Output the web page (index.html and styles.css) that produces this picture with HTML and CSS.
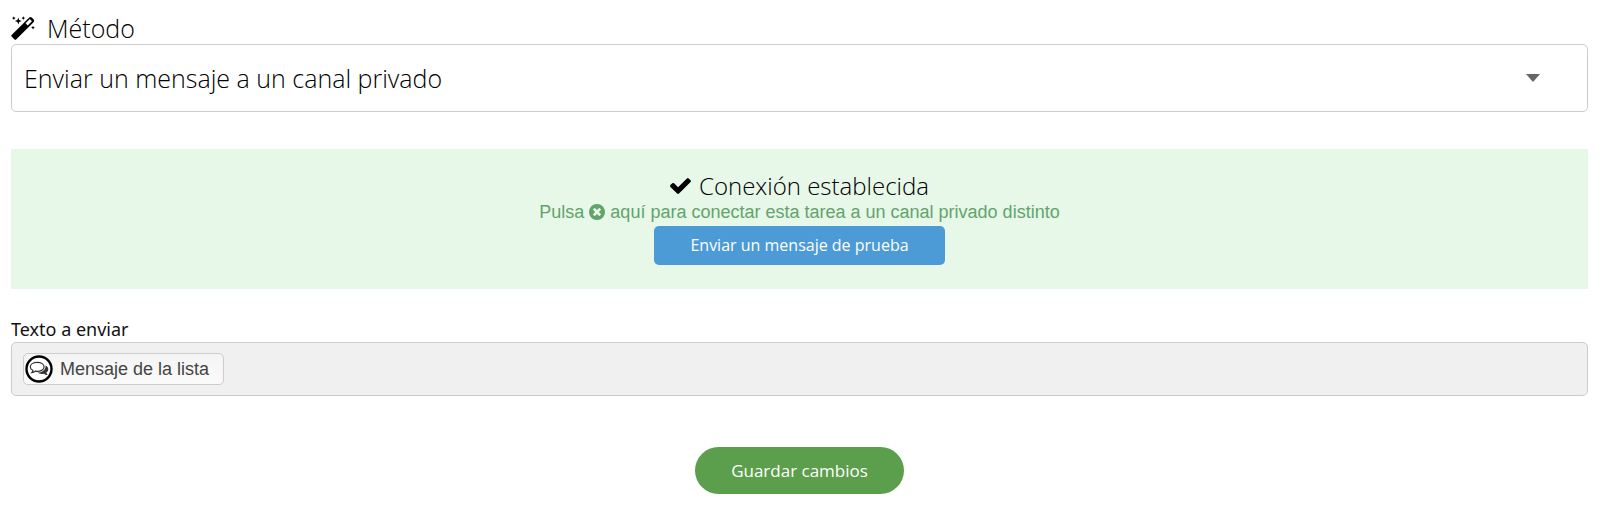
FILE: index.html
```html
<!DOCTYPE html>
<html lang="es">
<head>
<meta charset="UTF-8" />
<meta name="viewport" content="width=device-width, initial-scale=1" />
<title>Editar tarea</title>
<link rel="stylesheet" href="styles.css">
</head>
<body>
<form class="task-form">
  <label class="method-label" for="metodo">
    <svg class="icon-wand" viewBox="0 0 24 24" aria-hidden="true">
      <path fill-rule="evenodd" d="M.6 18.900 18 1.700q1.500-1.300 3 0l1.500 1.500q1.300 1.500 0 3L5.100 23.400q-.8.700-1.600 0L.6 20.500q-.7-.8 0-1.600zM14.600 7.300l2.100 2.100 4.200-4.200-2.100-2.100z"/>
      <path d="M7.300 1.600l.9 2.500 2.500.9-2.500.9-.9 2.500-.9-2.500L3.900 5l2.500-.9zM2.800.2l.6 1.300 1.300.6-1.300.6-.6 1.300-.6-1.300-1.300-.6 1.300-.6zM12.300.2l.6 1.300 1.300.6-1.300.6-.6 1.300-.6-1.300-1.300-.6 1.300-.6zM22 9.800l.6 1.300 1.300.6-1.300.6-.6 1.300-.6-1.300-1.300-.6 1.300-.6z"/>
    </svg>
    Método
  </label>
  <div class="select-wrap">
    <select class="method-select" id="metodo">
      <option>Enviar un mensaje a un canal privado</option>
    </select>
    <svg class="caret" viewBox="0 0 14 8" aria-hidden="true"><path d="M0 0h14L7 8z"/></svg>
  </div>

  <!-- Estado de la conexión -->
  <section class="connection">
    <h2 class="connection-title">
      <svg class="icon-check" viewBox="121 334 1550 1188" aria-hidden="true"><path d="M1671 566q0 40-28 68l-724 724-136 136q-28 28-68 28t-68-28l-136-136-362-362q-28-28-28-68t28-68l136-136q28-28 68-28t68 28l294 295 656-657q28-28 68-28t68 28l136 136q28 28 28 68z"/></svg>
      Conexión establecida
    </h2>
    <a class="connection-link" href="#">Pulsa <svg class="icon-times" viewBox="128 128 1536 1536" aria-hidden="true"><path d="M1277 1122q0-26-19-45l-181-181 181-181q19-19 19-45 0-27-19-46l-90-90q-19-19-46-19-26 0-45 19l-181 181-181-181q-19-19-45-19-27 0-46 19l-90 90q-19 19-19 46 0 26 19 45l181 181-181 181q-19 19-19 45 0 27 19 46l90 90q19 19 46 19 26 0 45-19l181-181 181 181q19 19 45 19 27 0 46-19l90-90q19-19 19-46zm387-226q0 209-103 385.500t-279.500 279.500-385.500 103-385.500-103-279.500-279.500-103-385.500 103-385.500 279.500-279.500 385.500-103 385.500 103 279.500 279.500 103 385.500z"/></svg> aquí para conectar esta tarea a un canal privado distinto</a>
    <button class="btn-test" type="button">Enviar un mensaje de prueba</button>
  </section>

  <div class="text-label" id="textoLabel">Texto a enviar</div>
  <div class="token-box" role="group" aria-labelledby="textoLabel">
    <button class="token" type="button">
      <svg class="icon-comments" viewBox="0 0 28 28" aria-hidden="true">
        <circle cx="14" cy="14" r="12.500" fill="#fff" stroke="#000" stroke-width="2.400"/>
        <path d="M20.600 10.400c3.400 1.700 3.500 5.300.8 7.100.2 1.200.8 1.800 1.500 2.500-1.700.1-3-.5-4-1.300-2.400.5-5 .1-6.600-1.100 4.600 0 8.700-2.800 8.300-7.200z" fill="#333"/>
        <path d="M12.200 7.300c-4 0-6.900 2-6.900 4.600 0 1.600 1 2.900 2.700 3.700-.1.900-.6 1.400-1.200 2 1.500-.1 2.700-.7 3.500-1.400 5 .7 8.800-1.500 8.800-4.300 0-2.600-2.900-4.600-6.900-4.600z" fill="#fff" stroke="#333" stroke-width="1.200"/>
      </svg>
      Mensaje de la lista
    </button>
  </div>

  <button class="btn-save" type="submit">Guardar cambios</button>
</form>
</body>
</html>
```
FILE: styles.css
```css
* {
  margin: 0;
  padding: 0;
  box-sizing: border-box;
}

body {
  font-family: 'Open Sans', 'Noto Sans', sans-serif;
  font-weight: 300;
  background: #fff;
  color: #000;
}

.task-form {
  display: flex;
  flex-direction: column;
  padding: 12px 12px 14px 11px;
}

button {
  font-family: inherit;
  border: none;
  cursor: pointer;
}

/* Método */
.method-label {
  display: flex;
  align-items: center;
  gap: 12px;
  font-size: 25px;
  line-height: 32px;
}

.icon-wand {
  width: 24px;
  height: 24px;
}

.select-wrap {
  position: relative;
  margin-bottom: 37px;
}

.method-select {
  display: block;
  width: 100%;
  height: 68px;
  padding: 0 80px 0 12px;
  appearance: none;
  font-family: inherit;
  font-weight: 300;
  font-size: 25px;
  color: #000;
  background: #fff;
  border: 1px solid #ccc;
  border-radius: 5px;
}

.caret {
  position: absolute;
  top: 30px;
  right: 48px;
  width: 14px;
  height: 8px;
  fill: #666;
  pointer-events: none;
}

/* Conexión */
.connection {
  display: flex;
  flex-direction: column;
  align-items: center;
  padding: 22px 16px 24px;
  margin-bottom: 28px;
  background: #e7f7e8;
}

.connection-title {
  display: flex;
  align-items: center;
  gap: 8px;
  font-size: 24px;
  line-height: 29px;
  font-weight: 300;
}

.icon-check {
  width: 21px;
  height: 16px;
}

.connection-link {
  margin-bottom: 2px;
  font-family: 'Liberation Sans', Arial, sans-serif;
  font-weight: 400;
  font-size: 18px;
  line-height: 24px;
  color: #62a46c;
  text-decoration: none;
}

.icon-times {
  width: 16px;
  height: 16px;
  fill: #62a46c;
  vertical-align: -2px;
}

.btn-test {
  padding: 0 36px;
  font-size: 16px;
  line-height: 39px;
  color: #fff;
  background: #4c9ad6;
  border-radius: 5px;
}

/* Texto a enviar */
.text-label {
  font-family: 'Noto Sans', sans-serif;
  font-weight: 400;
  font-size: 18px;
  line-height: 25px;
  color: #111;
}

.token-box {
  display: flex;
  padding: 10px 11px;
  margin-bottom: 51px;
  background: #f0f0f0;
  border: 1px solid #ccc;
  border-radius: 5px;
}

.token {
  display: flex;
  align-items: center;
  gap: 7px;
  height: 32px;
  padding: 0 14px 0 1px;
  font-family: 'Liberation Sans', Arial, sans-serif;
  font-size: 18px;
  color: #444;
  background: linear-gradient(#f4f4f4, #fafafa);
  border: 1px solid #ccc;
  border-radius: 5px;
}

.icon-comments {
  width: 28px;
  height: 28px;
}

.btn-save {
  align-self: center;
  padding: 0 36px;
  font-size: 17px;
  line-height: 47px;
  color: #fff;
  background: #5b9e4b;
  border-radius: 24px;
}
```
